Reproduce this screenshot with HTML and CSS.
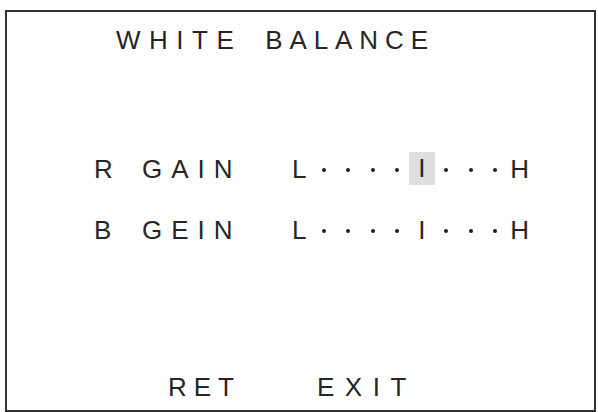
FILE: index.html
```html
<!DOCTYPE html>
<html lang="en">
<head>
<meta charset="utf-8">
<title>White Balance</title>
<link rel="stylesheet" href="styles.css">
</head>
<body>
<div class="screen">
  <div class="title">
    <span class="word w-white">WHITE</span>
    <span class="word w-balance">BALANCE</span>
  </div>

  <div class="rows">
    <div class="row">
      <div class="label"><span class="key">R</span><span class="word w-gain">GAIN</span></div>
      <div class="scale">
        <span class="cell">L</span>
        <span class="cell"><i class="dot"></i></span>
        <span class="cell"><i class="dot"></i></span>
        <span class="cell"><i class="dot"></i></span>
        <span class="cell"><i class="dot"></i></span>
        <span class="cell mark active">I</span>
        <span class="cell"><i class="dot"></i></span>
        <span class="cell"><i class="dot"></i></span>
        <span class="cell"><i class="dot"></i></span>
        <span class="cell">H</span>
      </div>
    </div>
    <div class="row">
      <div class="label"><span class="key">B</span><span class="word w-gain">GEIN</span></div>
      <div class="scale">
        <span class="cell">L</span>
        <span class="cell"><i class="dot"></i></span>
        <span class="cell"><i class="dot"></i></span>
        <span class="cell"><i class="dot"></i></span>
        <span class="cell"><i class="dot"></i></span>
        <span class="cell mark">I</span>
        <span class="cell"><i class="dot"></i></span>
        <span class="cell"><i class="dot"></i></span>
        <span class="cell"><i class="dot"></i></span>
        <span class="cell">H</span>
      </div>
    </div>
  </div>

  <div class="footer">
    <span class="word w-ret">RET</span>
    <span class="word w-exit">EXIT</span>
  </div>
</div>
</body>
</html>
```

FILE: styles.css
```css
html, body {
  margin: 0;
  padding: 0;
  background: #ffffff;
}

body {
  width: 598px;
  height: 412px;
  overflow: hidden;
  font-family: "Liberation Sans", Arial, sans-serif;
  font-size: 26px;
  color: #262626;
}

/* OSD frame */
.screen {
  box-sizing: border-box;
  margin: 10px 0 0 5px;
  width: 591px;
  height: 402px;
  border: 2px solid #333333;
  display: flex;
  flex-direction: column;
}

.word {
  display: inline-block;
  white-space: nowrap;
}

/* heading */
.title {
  display: flex;
  line-height: 26px;
  margin-top: 15px;
  padding-left: 109px;
  gap: 23px;
}

.w-white { letter-spacing: 8.5px; }
.w-balance { letter-spacing: 6.9px; }

/* adjustment rows */
.rows {
  display: flex;
  flex-direction: column;
  gap: 30px;
  margin-top: 101px;
  padding-left: 87px;
}

.row {
  display: flex;
  align-items: center;
  height: 31px;
}

.label {
  display: flex;
  width: 193px;
  line-height: 31px;
}

.key {
  width: 48px;
}

.w-gain { letter-spacing: 9px; }

.scale {
  display: flex;
  height: 31px;
}

.cell {
  width: 24.5px;
  height: 31px;
  display: flex;
  align-items: center;
  justify-content: center;
  line-height: 31px;
}

.cell.active {
  width: 26px;
  margin: -2px -0.75px 0;
  height: 33px;
  background: #dedede;
}

.dot {
  display: block;
  width: 4px;
  height: 4px;
  border-radius: 50%;
  background: #222222;
}

/* bottom commands */
.footer {
  margin-top: auto;
  margin-bottom: 10px;
  display: flex;
  line-height: 26px;
  padding-left: 161px;
  gap: 76px;
}

.w-ret { letter-spacing: 7px; }
.w-exit { letter-spacing: 10.5px; }
```
